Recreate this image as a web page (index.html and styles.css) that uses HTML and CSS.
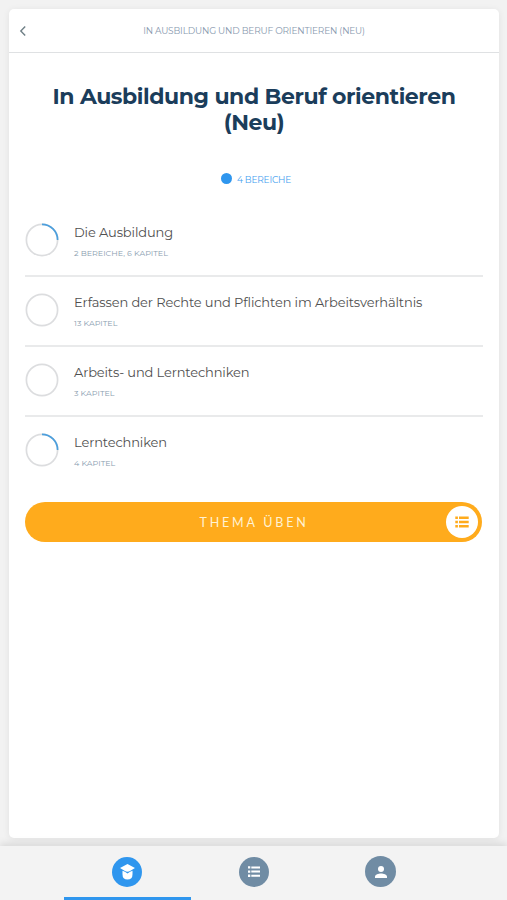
FILE: index.html
```
<!DOCTYPE html>
<html lang="de">
<head>
    <meta charset="UTF-8">
    <meta name="viewport" content="width=device-width, initial-scale=1">
    <title>In Ausbildung und Beruf orientieren (Neu)</title>
    <link rel="stylesheet" href="styles.css">
</head>
<body>

<main class="card">
    <header class="card_header">
        <svg class="back" viewBox="0 0 8 12"><path d="M6.2 1.4 L1.8 6 L6.2 10.6"/></svg>
        <span class="card_name">IN AUSBILDUNG UND BERUF ORIENTIEREN (NEU)</span>
    </header>

    <h1 class="title">In Ausbildung und Beruf orientieren<br>(Neu)</h1>

    <div class="summary">
        <span class="dot"></span>
        <span class="summary_text">4 BEREICHE</span>
    </div>

    <ul class="topics">
        <li class="topic">
            <svg class="ring" viewBox="0 0 34 34">
                <circle cx="17" cy="17" r="15.6"/>
                <path d="M17 1.4 A15.6 15.6 0 0 1 32.6 17"/>
            </svg>
            <div class="topic_text">
                <p class="topic_name">Die Ausbildung</p>
                <p class="topic_info">2 BEREICHE, 6 KAPITEL</p>
            </div>
        </li>
        <li class="topic">
            <svg class="ring" viewBox="0 0 34 34"><circle cx="17" cy="17" r="15.6"/></svg>
            <div class="topic_text">
                <p class="topic_name">Erfassen der Rechte und Pflichten im Arbeitsverhältnis</p>
                <p class="topic_info">13 KAPITEL</p>
            </div>
        </li>
        <li class="topic">
            <svg class="ring" viewBox="0 0 34 34"><circle cx="17" cy="17" r="15.6"/></svg>
            <div class="topic_text">
                <p class="topic_name">Arbeits- und Lerntechniken</p>
                <p class="topic_info">3 KAPITEL</p>
            </div>
        </li>
        <li class="topic">
            <svg class="ring" viewBox="0 0 34 34">
                <circle cx="17" cy="17" r="15.6"/>
                <path d="M17 1.4 A15.6 15.6 0 0 1 32.6 17"/>
            </svg>
            <div class="topic_text">
                <p class="topic_name">Lerntechniken</p>
                <p class="topic_info">4 KAPITEL</p>
            </div>
        </li>
    </ul>

    <button class="practice" type="button">
        <span class="practice_text">THEMA ÜBEN</span>
        <span class="practice_icon">
            <svg class="list" viewBox="0 0 14 12">
                <path d="M0.3 0.5h2.6v2.6h-2.6z M4 0.5h9.7v2.6h-9.7z M0.3 4.7h2.6v2.6h-2.6z M4 4.7h9.7v2.6h-9.7z M0.3 8.9h2.6v2.6h-2.6z M4 8.9h9.7v2.6h-9.7z"/>
            </svg>
        </span>
    </button>
</main>

<nav class="tabs">
    <a class="tab active" href="#">
        <span class="tab_icon">
            <svg class="cap" viewBox="0 0 14 15">
                <path d="M7 0 L14 3.8 L9.8 6.3 Q7 8.4 4.2 6.3 L0 3.8 Z"/>
                <path d="M2.3 6.3 Q4.6 7 7 8.8 Q9.4 7 11.7 6.3 V9.5 Q11.7 14.6 7 14.6 Q2.3 14.6 2.3 9.5 Z"/>
            </svg>
        </span>
    </a>
    <a class="tab" href="#">
        <span class="tab_icon">
            <svg class="list_small" viewBox="0 0 12 11">
                <path d="M0 0.2h2.3v2.3h-2.3z M3.3 0.4h8.7v2h-8.7z M0 4.4h2.3v2.3h-2.3z M3.3 4.6h8.7v2h-8.7z M0 8.6h2.3v2.3h-2.3z M3.3 8.8h8.7v2h-8.7z"/>
            </svg>
        </span>
    </a>
    <a class="tab" href="#">
        <span class="tab_icon profile">
            <svg class="person" viewBox="0 0 12 12">
                <circle cx="6" cy="3" r="3"/>
                <path d="M0 12 V10.5 C0 8.5 3.5 7.4 6 7.4 C8.5 7.4 12 8.5 12 10.5 V12 Z"/>
            </svg>
        </span>
    </a>
</nav>

</body>
</html>
```
FILE: styles.css
```
*{
    margin: 0;
    padding: 0;
    box-sizing: border-box;
}
body{
    display: flex;
    flex-direction: column;
    height: 900px;
    padding: 9px 8px 0 9px;
    background-color: #f2f2f2;
    font-family: "Montserrat", "Inter", "Liberation Sans", sans-serif;
    overflow: hidden;
}

.card{
    height: 829px;
    background-color: #fff;
    border-radius: 5px;
    box-shadow: 0 1px 7px rgba(0, 0, 0, 0.07);
}

.card_header{
    display: grid;
    grid-template-columns: 27px 1fr 27px;
    align-items: center;
    height: 44px;
    border-bottom: 1px solid #dfe1e3;
}

.back{
    width: 8px;
    height: 12px;
    margin-left: 10px;
    fill: none;
    stroke: #708087;
    stroke-width: 1.4;
}

.card_name{
    text-align: center;
    color: #8798ae;
    font-size: 9px;
    line-height: 12px;
    letter-spacing: -0.17px;
    white-space: nowrap;
}

.title{
    margin-top: 31px;
    text-align: center;
    color: #1b3d5b;
    font-size: 22px;
    font-weight: 700;
    line-height: 26px;
    letter-spacing: -0.42px;
    white-space: nowrap;
}

.summary{
    display: flex;
    justify-content: center;
    align-items: center;
    gap: 5px;
    height: 12px;
    margin-top: 36px;
    padding-left: 4px;
}

.dot{
    width: 11px;
    height: 11px;
    border-radius: 50%;
    background-color: #2f96ee;
}

.summary_text{
    padding-top: 3px;
    color: #3f9eef;
    font-size: 9px;
    line-height: 12px;
    letter-spacing: -0.2px;
}

.topics{
    margin: 23px 16px 0;
    list-style: none;
}

.topic{
    display: flex;
    height: 70px;
    padding-top: 16px;
    border-bottom: 2px solid #e9eaeb;
}

.topic:last-child{
    border-bottom: none;
}

.ring{
    width: 34px;
    height: 34px;
    fill: none;
    stroke: #dcdddf;
    stroke-width: 1.7;
}

.ring path{
    stroke: #4c9fdd;
}

.topic_text{
    margin-left: 15px;
}

.topic_name{
    color: #505050;
    font-size: 13px;
    line-height: 18px;
    letter-spacing: -0.13px;
}

.topic_info{
    margin-top: 7px;
    color: #899daf;
    font-size: 8px;
    line-height: 10px;
}

.practice{
    display: grid;
    grid-template-columns: 36px 1fr 36px;
    align-items: center;
    width: 457px;
    height: 40px;
    margin: 15px 16px 0;
    border: none;
    border-radius: 21px;
    background-color: #ffab1c;
    font-family: "Lato", "Liberation Sans", sans-serif;
}

.practice_text{
    grid-column: 2;
    padding-left: 1px;
    color: #fff2d4;
    font-size: 12.5px;
    letter-spacing: 2.8px;
}

.practice_icon{
    display: flex;
    justify-content: center;
    align-items: center;
    width: 32px;
    height: 32px;
    border-radius: 50%;
    background-color: #fff;
}

.list{
    width: 14px;
    height: 12px;
    fill: #ffab1c;
}

.tabs{
    display: flex;
    justify-content: center;
    height: 54px;
    margin: 8px -8px 0 -9px;
    padding-left: 1px;
    background-color: #f3f3f3;
    box-shadow: 0 -2px 8px rgba(0, 0, 0, 0.12);
}

.tab{
    display: flex;
    justify-content: center;
    align-items: center;
    width: 126.7px;
    border-bottom: 3px solid transparent;
}

.active{
    border-bottom-color: #2f96ee;
}

.tab_icon{
    display: flex;
    justify-content: center;
    align-items: center;
    width: 30px;
    height: 30px;
    border-radius: 50%;
    background-color: #708ca4;
    fill: #fff;
}

.active .tab_icon{
    background-color: #2f96ee;
}

.profile{
    width: 31px;
    height: 31px;
}

.cap{
    width: 15px;
    height: 16px;
}

.list_small{
    width: 12px;
    height: 11px;
}

.person{
    width: 12px;
    height: 12px;
}
```
